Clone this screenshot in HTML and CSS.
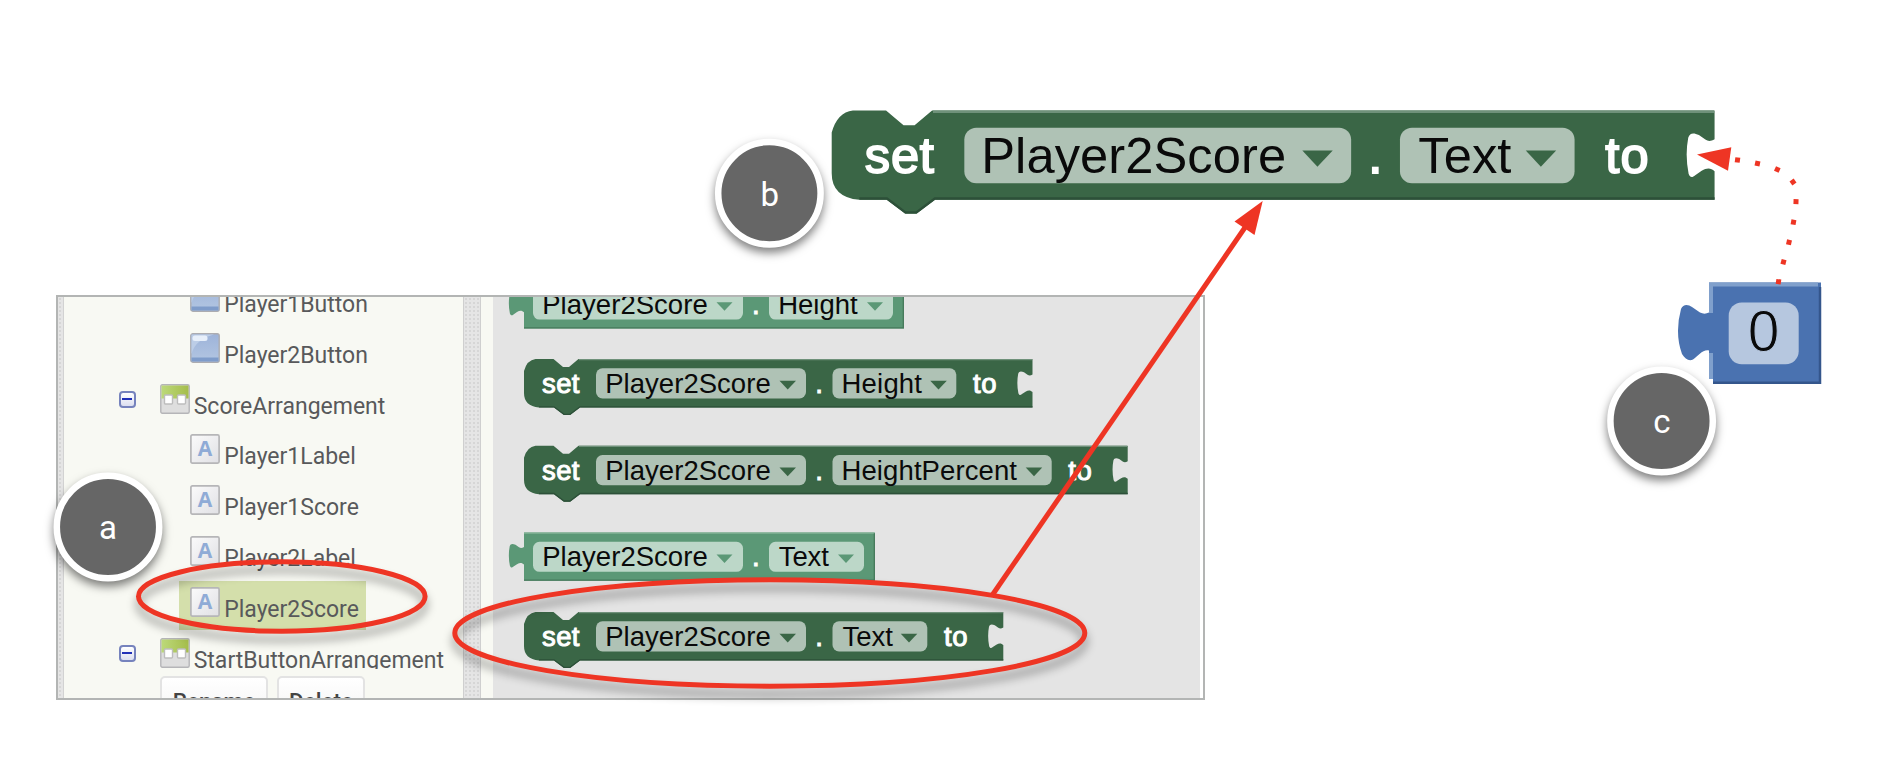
FILE: index.html
```html
<!DOCTYPE html>
<html lang="en">
<head>
<meta charset="utf-8">
<title>Set Player2Score text</title>
<link rel="stylesheet" href="styles.css">
</head>
<body>
<main class="canvas">
  <section class="panel">
    <div class="strip strip-left"></div>
    <div class="sidebar">
      <ul class="tree">
        <li class="row child"><span class="item"><svg class="icon" viewBox="0 0 30 30"><use href="#i-button"/></svg><span class="name">Player1Button</span></span></li>
        <li class="row child"><span class="item"><svg class="icon" viewBox="0 0 30 30"><use href="#i-button"/></svg><span class="name">Player2Button</span></span></li>
        <li class="row"><span class="toggle"></span><span class="item"><svg class="icon" viewBox="0 0 30 30"><use href="#i-arr"/></svg><span class="name">ScoreArrangement</span></span></li>
        <li class="row child"><span class="item"><svg class="icon" viewBox="0 0 30 30"><use href="#i-label"/></svg><span class="name">Player1Label</span></span></li>
        <li class="row child"><span class="item"><svg class="icon" viewBox="0 0 30 30"><use href="#i-label"/></svg><span class="name">Player1Score</span></span></li>
        <li class="row child"><span class="item"><svg class="icon" viewBox="0 0 30 30"><use href="#i-label"/></svg><span class="name">Player2Label</span></span></li>
        <li class="row child"><span class="item selected"><svg class="icon" viewBox="0 0 30 30"><use href="#i-label"/></svg><span class="name">Player2Score</span></span></li>
        <li class="row"><span class="toggle"></span><span class="item"><svg class="icon" viewBox="0 0 30 30"><use href="#i-arr"/></svg><span class="name">StartButtonArrangement</span></span></li>
      </ul>
      <div class="actions"><button class="btn rename">Rename</button><button class="btn delete">Delete</button></div>
    </div>
    <div class="strip strip-mid"></div>
    <div class="gutter"></div>
    <svg class="flyout" viewBox="493 297 707 401" width="707" height="401">
      <g class="getter" transform="translate(524 280.3)">
        <path class="body" d="M0 0H380V48.300H0V32c-2-1.900-4-2.100-7-.3l-3.500 2.400c-1.600 1.400-2.800 1.400-3.600-.8q-2-10-.2-19.500c.8-2.700 2.800-2.900 5.800-1.500l3.500 2.500c1.500 1 3 1 5-.2Z"/>
        <path class="lo" d="M0 47.600H379.300V0"/>
        <rect class="pill" x="9" y="9.300" width="210" height="30" rx="6.500"/>
        <text class="field" x="18.200" y="33.700" textLength="165.500">Player2Score</text>
        <path class="caret" d="M192.500 22H208.500L200.500 30.500Z"/>
        <text class="word" x="228" y="33.700">.</text>
        <rect class="pill" x="245" y="9.300" width="124" height="30" rx="6.500"/>
        <text class="field" x="254.200" y="33.700" textLength="79.500">Height</text>
        <path class="caret" d="M343 22H359L351 30.500Z"/>
      </g>
      <g class="setter" transform="translate(524 359)">
        <path class="body" d="M11.500 0H29.500L39 8H45L54.500 0H508.500V15.600c-2 1.200-3.500 1.200-5 .2l-3.500-2.500c-3-1.400-5-1.200-5.800 1.500q-1.800 9.500 .2 19.500c.8 2.200 2 2.200 3.600 .8l3.500-2.400c3-1.800 5-1.600 7 .3V48.500H56L46 56H40L30 48.500H15Q0 47 0 34V12Q3 1 11.500 0Z"/>
        <path class="hi" d="M55 .7H508"/><path class="lo" d="M15 47.800H30L40 55.300H46L56 47.800H508.500"/>
        <text class="word" x="18" y="34" textLength="37.500">set</text>
        <rect class="pill" x="72" y="9.300" width="210" height="30.200" rx="6.500"/>
        <text class="field" x="81.200" y="34" textLength="165.500">Player2Score</text>
        <path class="caret" d="M255.500 21.700H272L263.700 30.500Z"/>
        <text class="word" x="291.300" y="34">.</text>
        <rect class="pill" x="308.500" y="9.300" width="123.800" height="30.200" rx="6.500"/>
        <text class="field" x="317.500" y="34" textLength="80.500">Height</text>
        <path class="caret" d="M406.300 21.700H422.800L414.500 30.500Z"/>
        <text class="word" x="449" y="34" textLength="23.500">to</text>
      </g>
      <g class="setter" transform="translate(524 445.700)">
        <path class="body" d="M11.500 0H29.500L39 8H45L54.500 0H603.700V15.600c-2 1.200-3.500 1.200-5 .2l-3.500-2.500c-3-1.400-5-1.200-5.800 1.500q-1.800 9.500 .2 19.500c.8 2.200 2 2.200 3.600 .8l3.500-2.400c3-1.800 5-1.600 7 .3V48.500H56L46 56H40L30 48.500H15Q0 47 0 34V12Q3 1 11.500 0Z"/>
        <path class="hi" d="M55 .7H603"/><path class="lo" d="M15 47.800H30L40 55.300H46L56 47.800H603.700"/>
        <text class="word" x="18" y="34" textLength="37.500">set</text>
        <rect class="pill" x="72" y="9.300" width="210" height="30.200" rx="6.500"/>
        <text class="field" x="81.200" y="34" textLength="165.500">Player2Score</text>
        <path class="caret" d="M255.500 21.700H272L263.700 30.500Z"/>
        <text class="word" x="291.300" y="34">.</text>
        <rect class="pill" x="308.500" y="9.300" width="219.200" height="30.200" rx="6.500"/>
        <text class="field" x="317.500" y="34" textLength="175.500">HeightPercent</text>
        <path class="caret" d="M501.700 21.700H518.200L510 30.500Z"/>
        <text class="word" x="544.300" y="34" textLength="23.500">to</text>
      </g>
      <g class="getter" transform="translate(524 532.500)">
        <path class="body" d="M0 0H351V48.300H0V32c-2-1.900-4-2.100-7-.3l-3.500 2.400c-1.600 1.400-2.800 1.400-3.600-.8q-2-10-.2-19.500c.8-2.700 2.800-2.900 5.800-1.500l3.500 2.500c1.500 1 3 1 5-.2Z"/>
        <path class="hi" d="M0 .7H350"/><path class="lo" d="M0 47.600H350.300V1"/>
        <rect class="pill" x="9" y="9.300" width="210" height="30" rx="6.500"/>
        <text class="field" x="18.200" y="33.700" textLength="165.500">Player2Score</text>
        <path class="caret" d="M192.500 22H208.500L200.500 30.500Z"/>
        <text class="word" x="228" y="33.700">.</text>
        <rect class="pill" x="245" y="9.300" width="95" height="30" rx="6.500"/>
        <text class="field" x="254.800" y="33.700" textLength="50">Text</text>
        <path class="caret" d="M314 22H330L322 30.500Z"/>
      </g>
      <g class="setter" transform="translate(524 612)">
        <use href="#set-text-shape"/>
        <text class="word" x="18" y="34" textLength="37.500">set</text>
        <text class="field" x="81.200" y="34" textLength="165.500">Player2Score</text>
        <text class="word" x="291.300" y="34">.</text>
        <text class="field" x="318.500" y="34" textLength="50.500">Text</text>
        <text class="word" x="420" y="34" textLength="23.500">to</text>
      </g>
    </svg>
  </section>

  <svg class="overlay" viewBox="0 0 1880 770" width="1880" height="770">
    <defs>
      <linearGradient id="gb" x1="0" y1="0" x2="0" y2="1"><stop offset="0" stop-color="#9db3d9"/><stop offset="1" stop-color="#b3c6e2"/></linearGradient>
      <linearGradient id="gg" x1="0" y1="0" x2="1" y2="0"><stop offset="0" stop-color="#bcd97a"/><stop offset="1" stop-color="#a5bd4b"/></linearGradient>
      <linearGradient id="gw" x1="0" y1="0" x2="1" y2="1"><stop offset="0" stop-color="#fbfbfb"/><stop offset="1" stop-color="#e0e0e4"/></linearGradient>
      <g id="i-button"><rect x=".8" y=".8" width="28.400" height="28.400" rx="2" fill="url(#gb)" stroke="#acacb0" stroke-width="1.400"/><path d="M1.500 1.500H24C13 4 4 11 1.500 21Z" fill="#bccde7"/><rect x="2.500" y="2.500" width="15" height="5.500" rx="2.500" fill="#e7effa"/><path d="M1.500 24.500H28.500V28.500H1.500Z" fill="#7f9cca"/></g>
      <g id="i-arr"><rect x=".8" y=".8" width="28.400" height="28.400" rx="1.500" fill="#dedede" stroke="#b5b5b8" stroke-width="1.400"/><path d="M1.500 1.500H28.500V14.500H1.500Z" fill="url(#gg)"/><rect x="4.500" y="11" width="8" height="9" rx="1" fill="#fff" stroke="#bdbdbd" stroke-width="1.400"/><rect x="17.500" y="11" width="8" height="9" rx="1" fill="#fff" stroke="#bdbdbd" stroke-width="1.400"/></g>
      <g id="i-label"><rect x=".9" y=".9" width="28.200" height="28.200" rx="1.500" fill="url(#gw)" stroke="#b6b6b8" stroke-width="1.700"/><text class="icon-letter" x="15" y="22.300" text-anchor="middle">A</text></g>
      <g id="set-text-shape" class="setter">
        <path class="body" d="M11.500 0H29.500L39 8H45L54.500 0H479.300V15.600c-2 1.200-3.500 1.200-5 .2l-3.500-2.500c-3-1.400-5-1.200-5.800 1.500q-1.800 9.500 .2 19.500c.8 2.200 2 2.200 3.600 .8l3.500-2.400c3-1.800 5-1.600 7 .3V48.500H56L46 56H40L30 48.500H15Q0 47 0 34V12Q3 1 11.500 0Z"/>
        <path class="hi" d="M55 .7H479"/><path class="lo" d="M15 47.800H30L40 55.300H46L56 47.800H479.300"/>
        <rect class="pill" x="72" y="9.300" width="210" height="30.200" rx="6.500"/>
        <path class="caret" d="M255.500 21.700H272L263.700 30.500Z"/>
        <rect class="pill" x="308.500" y="9.300" width="94.800" height="30.200" rx="6.500"/>
        <path class="caret" d="M376.800 21.700H393.300L385 30.500Z"/>
      </g>
    </defs>

    <g class="setter" transform="translate(831.700 110.500) scale(1.842)">
      <use href="#set-text-shape"/>
      <text class="word" x="18" y="34" textLength="37.500">set</text>
      <text class="field" x="81.200" y="34" textLength="165.500">Player2Score</text>
      <text class="word" x="291.300" y="34">.</text>
      <text class="field" x="318.500" y="34" textLength="50.500">Text</text>
      <text class="word" x="420" y="34" textLength="23.500">to</text>
    </g>

    <g class="number">
      <path class="body" d="M1709 282.500H1821V384H1713V379H1709V350.500C1703 349 1698 356 1693 359.500C1689 361.500 1685 359 1682 354Q1674.500 333 1681 309C1683 304 1688 304 1692 307L1700 312.500C1703 314 1706 314 1709 312.500Z"/>
      <path class="num-hi" d="M1709 284.500H1818M1711 284V313M1711 353V379"/>
      <path class="num-lo" d="M1713 382.800H1820V287"/>
      <rect class="pill" x="1728.700" y="302.500" width="70" height="61.800" rx="13"/>
      <text class="digit" x="1763.500" y="351" text-anchor="middle">0</text>
    </g>

    <g class="ring">
      <ellipse cx="281.800" cy="596.500" rx="143.300" ry="34.700"/>
      <ellipse cx="769.800" cy="633" rx="315" ry="53.200"/>
    </g>
    <path class="line" d="M992.700 594.500L1246 226"/>
    <path class="head" d="M1262.700 201L1234.500 221.500L1254.500 235Z"/>
    <path class="head" d="M1697 154.500L1731.300 147.300L1728 170.700Z"/>
    <g class="dots">
      <rect x="-2.500" y="-2.500" width="5" height="5" transform="translate(1737.500 160) rotate(8)"/>
      <rect x="-2.500" y="-2.500" width="5" height="5" transform="translate(1757.500 163.500) rotate(12)"/>
      <rect x="-2.500" y="-2.500" width="5" height="5" transform="translate(1777.300 169.500) rotate(24)"/>
      <rect x="-2.500" y="-2.500" width="5" height="5" transform="translate(1793 182) rotate(55)"/>
      <rect x="-2.500" y="-2.500" width="5" height="5" transform="translate(1796 201.700) rotate(2)"/>
      <rect x="-2.500" y="-2.500" width="5" height="5" transform="translate(1793.500 222.200) rotate(10)"/>
      <rect x="-2.500" y="-2.500" width="5" height="5" transform="translate(1789 242.300) rotate(13)"/>
      <rect x="-2.500" y="-2.500" width="5" height="5" transform="translate(1783.500 262) rotate(14)"/>
      <rect x="-2.500" y="-2.500" width="5" height="5" transform="translate(1778.500 281.700) rotate(8)"/>
    </g>
    <g class="badge">
      <circle cx="108" cy="527" r="51.200"/><text x="108" y="539.300">a</text>
    </g>
    <g class="badge">
      <circle cx="769.400" cy="193.300" r="51.200"/><text x="769.700" y="205.700">b</text>
    </g>
    <g class="badge">
      <circle cx="1661.600" cy="421" r="51.200"/><text x="1661.800" y="432.700">c</text>
    </g>
  </svg>
</main>
</body>
</html>
```
FILE: styles.css
```css
* { box-sizing: border-box; }
body { margin: 0; background: #fff; font-family: Roboto, sans-serif; }
.canvas { position: relative; width: 1880px; height: 770px; overflow: hidden; padding: 295px 0 0 56px; }

.panel { display: flex; width: 1149px; height: 405px; border: 2px solid #b3b5b4; background: #fff; overflow: hidden; }
.strip { flex: none; background: #e5e5e5 radial-gradient(circle, #d6d6d6 0.8px, transparent 1.2px) 0 0 / 4px 4px; }
.strip-left { width: 6px; border-right: 1.500px solid #d2d2d2; }
.strip-mid { width: 18px; border-left: 1.500px solid #cfcfcf; border-right: 1.500px solid #cfcfcf; }
.gutter { flex: none; width: 12px; background: #f8f9f3; }
.flyout { flex: none; display: block; background: #e4e4e4; }

.sidebar { flex: none; width: 399px; background: #f8f9f3; overflow: hidden; }
.tree { list-style: none; margin: 0; padding: 0 0 0 54px; height: 371.500px; overflow: hidden; }
.row { display: flex; height: 50.850px; }
.row:first-child { margin-top: -21.100px; }
.child { padding-left: 60.700px; }
.item { display: flex; height: 49px; padding: 6px 7px 0 11.500px; }
.row:not(.child) .item { margin-left: 13.200px; }
.selected { background: #d4dfab; }
.icon { flex: none; width: 30px; height: 30px; }
.name { margin-left: 4px; padding-top: 9px; font-size: 23px; line-height: 27px; color: #58595b; white-space: nowrap; }
.icon-letter { font: bold 21px "Open Sans", sans-serif; fill: #8fabd6; }
.toggle { width: 17px; height: 17px; margin-top: 13px; margin-left: .5px; margin-right: -.5px; border: 2px solid #7683bd; border-radius: 4px; background: linear-gradient(#2130b8, #2130b8) center / 10px 2px no-repeat, linear-gradient(#fff, #dcdff0); }

.actions { display: flex; gap: 9px; padding: 7px 0 0 96px; }
.btn { height: 46px; padding: 4px 0 0; border: 2px solid #e3e3e3; border-radius: 5px; background: linear-gradient(#fff, #f3f3f3); font: 500 22.500px/34px Roboto, sans-serif; color: #444; }
.rename { width: 108px; }
.delete { width: 88px; }

.setter .body { fill: #3a6646; }
.setter .pill { fill: #afc2b5; }
.setter .caret { fill: #3a6646; }
.setter .hi { stroke: #6f917a; }
.setter .lo { stroke: #2d5039; }
.getter .body { fill: #5b9876; }
.getter .pill { fill: #bcd7c8; }
.getter .caret { fill: #5b9876; }
.getter .hi { stroke: #85b498; }
.getter .lo { stroke: #477a5c; }
.hi, .lo { fill: none; stroke-width: 1.300; }
.field { font: 27.500px "Liberation Sans", sans-serif; fill: #0a0a0a; }
.word { font: 27.500px "Liberation Sans", sans-serif; fill: #fff; stroke: #fff; stroke-width: 1; }

.number .body { fill: #4a72b0; }
.number .pill { fill: #b6c7df; }
.num-hi { fill: none; stroke: #80a0cc; stroke-width: 4; }
.num-lo { fill: none; stroke: #34568c; stroke-width: 2.500; }
.digit { font: 57px "Liberation Sans", sans-serif; fill: #0a0a0a; stroke: #b6c7df; stroke-width: 1; }

.overlay { position: absolute; left: 0; top: 0; pointer-events: none; }
.ring { fill: none; stroke: #ee3524; stroke-width: 5; filter: drop-shadow(0 8px 5px rgba(0, 0, 0, 0.4)); }
.line { fill: none; stroke: #ee3524; stroke-width: 5; }
.head, .dots { fill: #ee3524; }
.badge circle { fill: #666; stroke: #fff; stroke-width: 6.500; filter: drop-shadow(0 5px 5px rgba(0, 0, 0, 0.5)); }
.badge text { font: 33px Roboto, sans-serif; fill: #fff; text-anchor: middle; }
```
